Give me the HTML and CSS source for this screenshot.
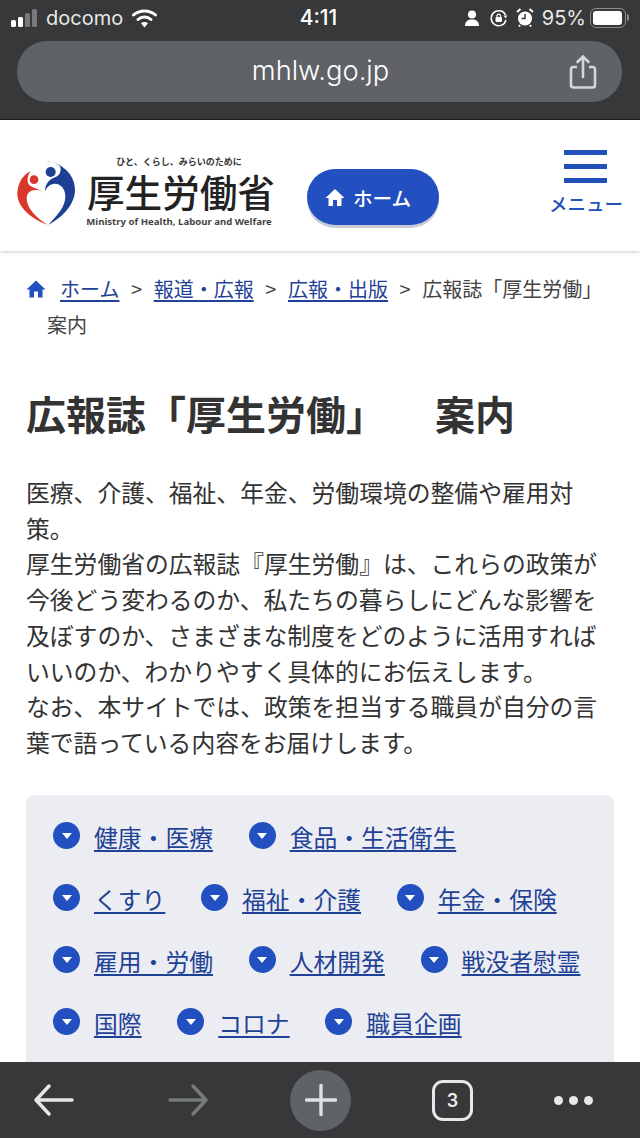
FILE: index.html
```html
<!DOCTYPE html>
<html lang="ja">
<head>
    <meta charset="UTF-8">
    <meta name="viewport" content="width=device-width, initial-scale=1.0">
    <title>広報誌「厚生労働」 案内</title>
    <link rel="stylesheet" href="styles.css">
</head>
<body>
    <div class="browser-top">
        <div class="status-bar">
            <div class="status-left">
                <svg class="signal" width="28" height="18" viewBox="0 0 28 18">
                    <rect x="0" y="11" width="5" height="7" rx="1.5" fill="#fff"/>
                    <rect x="7" y="8" width="5" height="10" rx="1.5" fill="#fff"/>
                    <rect x="14" y="4" width="5" height="14" rx="1.5" fill="#77797c"/>
                    <rect x="21" y="0" width="5" height="18" rx="1.5" fill="#77797c"/>
                </svg>
                <span class="carrier">docomo</span>
                <svg class="wifi" width="25" height="20" viewBox="0 0 25 20">
                    <path d="M1.5 7 C7.5 1.5 17.5 1.5 23.5 7" fill="none" stroke="#fff" stroke-width="3" stroke-linecap="round"/>
                    <path d="M6 11.5 C9.5 8.3 15.5 8.3 19 11.5" fill="none" stroke="#fff" stroke-width="3" stroke-linecap="round"/>
                    <path d="M9 15.2 L12.5 19.5 L16 15.2 C14 13.6 11 13.6 9 15.2 Z" fill="#fff"/>
                </svg>
            </div>
            <div class="status-time">4:11</div>
            <div class="status-right">
                <svg class="st-person" width="16" height="16" viewBox="0 0 16 16">
                    <circle cx="8" cy="4.5" r="4" fill="#fff"/>
                    <path d="M1 16 C1 11 4 9.5 8 9.5 C12 9.5 15 11 15 16 Z" fill="#fff"/>
                </svg>
                <svg class="st-lock" width="18" height="18" viewBox="0 0 18 18">
                    <path d="M15.5 6 A7.5 7.5 0 1 0 16 11" fill="none" stroke="#fff" stroke-width="1.5"/>
                    <path d="M13.5 6.5 L17.5 6.5 L15.5 9.5 Z" fill="#fff"/>
                    <rect x="5.5" y="8" width="6.5" height="5" rx="1" fill="#fff"/>
                    <path d="M7 8 V6.5 A1.8 1.8 0 0 1 10.5 6.5 V8" fill="none" stroke="#fff" stroke-width="1.2"/>
                </svg>
                <svg class="st-alarm" width="18" height="19" viewBox="0 0 18 19">
                    <circle cx="9" cy="10.5" r="7" fill="#fff"/>
                    <path d="M9 6 V10.5 H5.5" fill="none" stroke="#36383a" stroke-width="1.5"/>
                    <path d="M1 4 L4.5 1 M17 4 L13.5 1 M4 17 L3 18.5 M14 17 L15 18.5" stroke="#fff" stroke-width="2"/>
                </svg>
                <span class="battery-text">95%</span>
                <div class="battery"><div class="battery-fill"></div></div>
            </div>
        </div>
        <div class="url-bar">
            <span class="url-text">mhlw.go.jp</span>
            <svg class="share" width="30" height="36" viewBox="0 0 30 36">
                <path d="M9 13 H5.5 A2.5 2.5 0 0 0 3 15.5 V31 A2.5 2.5 0 0 0 5.5 33.5 H24.5 A2.5 2.5 0 0 0 27 31 V15.5 A2.5 2.5 0 0 0 24.5 13 H21" fill="none" stroke="#d5d6d8" stroke-width="2.6"/>
                <path d="M15 23 V2.5 M9.5 8 L15 2.5 L20.5 8" fill="none" stroke="#d5d6d8" stroke-width="2.6" stroke-linecap="round"/>
            </svg>
        </div>
    </div>

    <header class="site-header">
        <a class="logo">
            <svg class="logo-mark" width="62" height="68" viewBox="15 10 186 204">
                <path d="M105 18 C150 22 195 55 195 105 C195 150 155 190 115 210 C145 180 166 155 166 125 C166 100 148 85 130 88 C118 90 110 98 105 110 C105 92 115 75 135 68 C150 62 155 50 150 35 C140 25 120 20 105 18 Z" fill="#1d3f94"/>
                <circle cx="122" cy="52" r="15" fill="#1d3f94"/>
                <path d="M62 50 C38 60 22 88 22 118 C22 160 70 195 112 210 C80 190 50 160 50 132 C50 112 65 104 80 106 C90 107 98 110 105 115 C92 105 72 100 60 93 C50 85 50 65 62 50 Z" fill="#d8392b"/>
                <circle cx="72" cy="75" r="13" fill="#d8392b"/>
            </svg>
            <div class="logo-words">
                <div class="logo-tag">ひと、くらし、みらいのために</div>
                <div class="logo-name">厚生労働省</div>
                <div class="logo-en">Ministry of Health, Labour and Welfare</div>
            </div>
        </a>
        <a class="home-btn">
            <svg width="20" height="19" viewBox="0 0 20 18"><path d="M10 0.5 L19.5 9.5 H16.5 V17.5 H12 V11.5 H8 V17.5 H3.5 V9.5 H0.5 Z" fill="#fff"/></svg>
            <span>ホーム</span>
        </a>
        <a class="menu-btn">
            <span class="menu-bars"><i></i><i></i><i></i></span>
            <span class="menu-label">メニュー</span>
        </a>
    </header>

    <main class="content">
        <p class="breadcrumb">
            <svg class="crumb-home" width="20" height="18" viewBox="0 0 20 18"><path d="M10 0.5 L19.5 9.5 H16.5 V17.5 H12 V11.5 H8 V17.5 H3.5 V9.5 H0.5 Z" fill="#2150c0"/></svg><a>ホーム</a><span class="sep">&gt;</span><a>報道・広報</a><span class="sep">&gt;</span><a>広報・出版</a><span class="sep">&gt;</span><span>広報誌「厚生労働」</span><span>案内</span>
        </p>

        <h1>広報誌「厚生労働」<span class="title-rest">案内</span></h1>

        <p class="lead">
            医療、介護、福祉、年金、労働環境の整備や雇用対策。<br>
            厚生労働省の広報誌『厚生労働』は、これらの政策が今後どう変わるのか、私たちの暮らしにどんな影響を及ぼすのか、さまざまな制度をどのように活用すればいいのか、わかりやすく具体的にお伝えします。<br>
            なお、本サイトでは、政策を担当する職員が自分の言葉で語っている内容をお届けします。
        </p>

        <div class="topics">
            <a class="topic"><i class="topic-icon"></i><span>健康・医療</span></a>
            <a class="topic"><i class="topic-icon"></i><span>食品・生活衛生</span></a>
            <a class="topic"><i class="topic-icon"></i><span>くすり</span></a>
            <a class="topic"><i class="topic-icon"></i><span>福祉・介護</span></a>
            <a class="topic"><i class="topic-icon"></i><span>年金・保険</span></a>
            <a class="topic"><i class="topic-icon"></i><span>雇用・労働</span></a>
            <a class="topic"><i class="topic-icon"></i><span>人材開発</span></a>
            <a class="topic"><i class="topic-icon"></i><span>戦没者慰霊</span></a>
            <a class="topic"><i class="topic-icon"></i><span>国際</span></a>
            <a class="topic"><i class="topic-icon"></i><span>コロナ</span></a>
            <a class="topic"><i class="topic-icon"></i><span>職員企画</span></a>
        </div>
    </main>

    <nav class="browser-bottom">
        <svg class="nav-back" width="40" height="32" viewBox="0 0 40 32">
            <path d="M38 16 H3 M15 2 L2 16 L15 30" fill="none" stroke="#e6e7e8" stroke-width="3.4" stroke-linecap="round" stroke-linejoin="round"/>
        </svg>
        <svg class="nav-forward" width="40" height="32" viewBox="0 0 40 32">
            <path d="M2 16 H37 M25 2 L38 16 L25 30" fill="none" stroke="#76787a" stroke-width="3.4" stroke-linecap="round" stroke-linejoin="round"/>
        </svg>
        <div class="new-tab">
            <svg width="32" height="32" viewBox="0 0 32 32">
                <path d="M16 1.5 V30.5 M1.5 16 H30.5" stroke="#e0e1e3" stroke-width="3.4" stroke-linecap="round"/>
            </svg>
        </div>
        <div class="tab-count">3</div>
        <div class="more"><i></i><i></i><i></i></div>
    </nav>
</body>
</html>
```

FILE: styles.css
```css
* { box-sizing: border-box; }
body {
    margin: 0; height: 100vh; overflow: hidden;
    display: flex; flex-direction: column;
    font-family: "Noto Sans CJK JP", "Noto Sans", sans-serif;
    color: #333; background: #fff;
}

/* browser chrome, top */
.browser-top { height: 120px; flex: none; background: #36383a; color: #fff; border-bottom: 1px solid #1e1f20; font-family: Inter, sans-serif; }
.status-bar { height: 41px; padding: 0 14px 6px 11px; display: grid; grid-template-columns: 1fr auto 1fr; align-items: center; font-size: 20px; }
.status-left { display: flex; align-items: center; gap: 7px; }
.carrier { color: #e8e8e8; }
.wifi { margin-left: 2px; }
.status-time { font-size: 21px; font-weight: 500; }
.status-right { display: flex; align-items: center; justify-content: flex-end; gap: 7px; }
.st-person { margin-right: 3px; }
.st-lock { margin-right: 1px; }
.st-alarm { margin-right: 1px; }
.battery-text { color: #e8e8e8; }
.battery { width: 36px; height: 20px; border: 1.5px solid #8a8b8d; border-radius: 6px; padding: 2px; margin-left: -3px; position: relative; }
.battery::after { content: ""; position: absolute; right: -4px; top: 5px; width: 2px; height: 7px; background: #8a8b8d; border-radius: 0 2px 2px 0; }
.battery-fill { height: 100%; width: 95%; background: #fff; border-radius: 3px; }
.url-bar { height: 61px; margin: 0 18px 0 17px; border-radius: 30px; background: #5f6266; display: flex; align-items: center; justify-content: center; position: relative; }
.url-text { font-size: 27.3px; font-weight: 300; color: #fff; margin: -2px 0 0 2px; }
.share { position: absolute; right: 24px; top: 13px; }

/* site header */
.site-header { height: 131px; flex: none; display: flex; align-items: center; padding: 0 16px 0 15px; background: #fff; box-shadow: 0 1px 4px rgba(0, 0, 0, .2); position: relative; z-index: 1; }
.logo { display: flex; align-items: center; gap: 10px; width: 292px; margin-top: 13px; }
.logo-mark { flex: none; }
.logo-words { text-align: center; color: #222; width: 188px; }
.logo-tag { font-size: 9px; font-weight: 700; line-height: 12px; color: #333; margin-left: -4px; }
.logo-name { font-family: "Liberation Sans", "Noto Sans CJK JP", sans-serif; font-size: 37.6px; font-weight: 500; line-height: 40px; padding-top: 6px; white-space: nowrap; }
.logo-en { font-size: 9.6px; font-weight: 700; line-height: 14px; padding-top: 1px; color: #444; white-space: nowrap; font-family: "Noto Sans", sans-serif; margin-left: -4px; }
.home-btn { width: 132px; height: 56px; margin-top: 23px; border-radius: 28px; background: #2350c0; box-shadow: 0 3px 0 #c9ccd8; color: #fff; display: flex; align-items: center; justify-content: center; gap: 8px; font-size: 19.6px; font-weight: 500; padding-right: 10px; }
.menu-btn { margin-left: 110px; width: 74px; display: flex; flex-direction: column; align-items: center; color: #2150b8; margin-top: -4px; }
.menu-bars { display: flex; flex-direction: column; gap: 9px; margin-right: 2px; }
.menu-bars i { display: block; width: 43px; height: 5px; background: #2150b8; }
.menu-label { font-size: 18.5px; font-weight: 500; line-height: 28px; margin-top: 6px; white-space: nowrap; }

/* main content */
.content { flex: 1; min-height: 0; overflow: hidden; padding: 0 26px; }
.content a { color: #1f4296; text-decoration: underline; text-underline-offset: 3px; }
.breadcrumb { margin: 20px 0 0; padding-left: 21px; text-indent: -21px; font-size: 20px; line-height: 36px; color: #444; }
.crumb-home { margin-right: 14px; vertical-align: -1px; }
.sep { margin: 0 11.6px; }
h1 { margin: 39px 0 0; font-size: 40px; line-height: 62px; font-weight: 700; color: #333; white-space: nowrap; }
.title-rest { margin-left: 49px; }
.lead { margin: 30px 0 0; font-size: 23.8px; line-height: 35.7px; color: #333; }
.topics { margin-top: 35px; height: 320px; padding: 27px 27px 0; border-radius: 8px; background: #ebedf3; display: flex; flex-wrap: wrap; align-content: flex-start; column-gap: 35.7px; row-gap: 33px; }
.topic { display: flex; align-items: flex-start; gap: 14px; font-size: 23.8px; line-height: 29px; white-space: nowrap; }
.topic-icon { width: 27px; height: 27px; border-radius: 50%; background: #2350c0; flex: none; display: flex; align-items: center; justify-content: center; }
.topic-icon::after { content: ""; border-left: 5px solid transparent; border-right: 5px solid transparent; border-top: 6px solid #fff; margin-top: 1px; }

/* browser chrome, bottom */
.browser-bottom { height: 76px; flex: none; background: #36383a; position: relative; z-index: 2; display: flex; align-items: center; padding-left: 34px; }
.nav-forward { margin-left: 94px; }
.new-tab { width: 61px; height: 61px; margin-left: 82px; border-radius: 50%; background: #5f6266; display: flex; align-items: center; justify-content: center; }
.tab-count { width: 41px; height: 41px; margin-left: 81px; border: 3px solid #e6e7e8; border-radius: 11px; color: #eee; display: flex; align-items: center; justify-content: center; font-family: Inter, sans-serif; font-size: 18px; font-weight: 600; }
.more { display: flex; gap: 6px; margin-left: 81px; }
.more i { width: 9px; height: 9px; border-radius: 50%; background: #e6e7e8; }
```
